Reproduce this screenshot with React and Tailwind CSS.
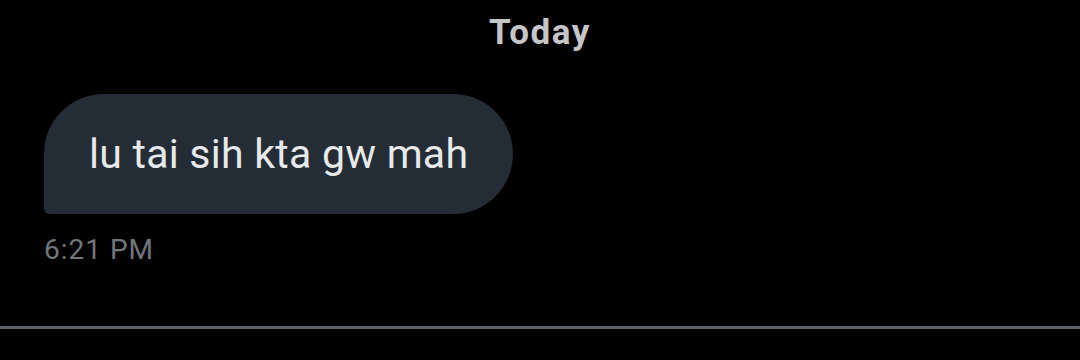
import React from 'react';

// Single DM thread snippet: date divider, one received bubble, timestamp
const App = () => {
    return (
        <div
            className="w-[1080px] h-[360px] bg-black flex flex-col overflow-hidden"
            style={{ fontFamily: 'Roboto, "Noto Sans", sans-serif' }}
        >
            <div className="h-[64px] flex items-center justify-center">
                <span className="text-[35px] font-bold text-[#c5c6c7] leading-none tracking-[1.5px]">Today</span>
            </div>
            <div className="pl-[44px] pt-[30px]">
                <div className="inline-flex items-center h-[120px] px-[45px] bg-[#242d36] rounded-tl-[60px] rounded-tr-[60px] rounded-br-[60px] rounded-bl-[6px]">
                    <span className="text-[41px] text-[#e7e9ea] leading-none tracking-[0.25px]">lu tai sih kta gw mah</span>
                </div>
                <div className="mt-[22px] text-[28px] text-[#71767b] leading-none tracking-[1px]">6:21 PM</div>
            </div>
            <div className="mt-auto mb-[31px] h-[3px] bg-[#5c636a]" />
        </div>
    );
};

export default App;
